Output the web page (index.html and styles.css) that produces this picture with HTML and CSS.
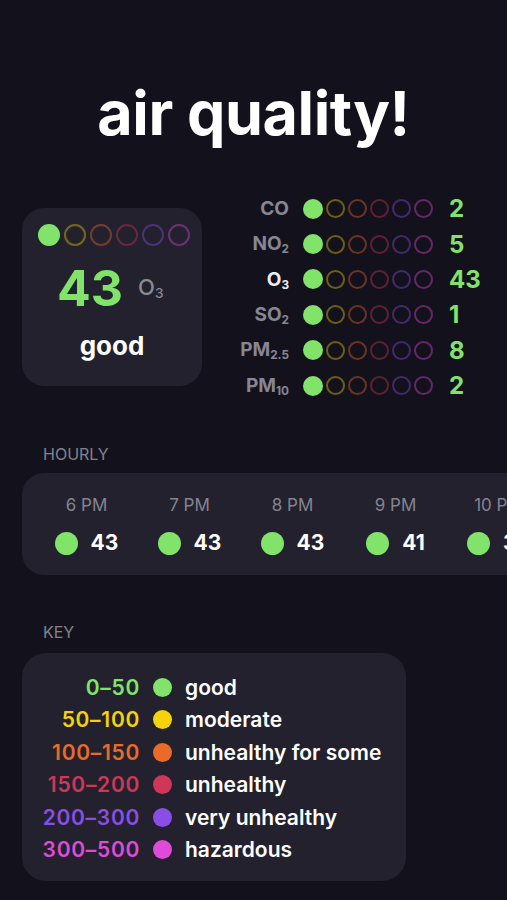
FILE: index.html
```html
<!DOCTYPE html>
<html lang="en">
<head>
    <meta charset="UTF-8">
    <meta name="viewport" content="width=device-width, initial-scale=1.0">
    <title>air quality!</title>
    <link rel="stylesheet" href="styles.css">
</head>
<body>
    <h1 class="title">air quality!</h1>

    <div class="overview">
        <div class="main-card">
            <div class="scale big">
                <span class="dot good"></span>
                <span class="ring moderate"></span>
                <span class="ring some"></span>
                <span class="ring unhealthy"></span>
                <span class="ring very"></span>
                <span class="ring hazard"></span>
            </div>
            <div class="main-value">
                <span class="aqi">43</span>
                <span class="main-pollutant">O<sub>3</sub></span>
            </div>
            <div class="main-label">good</div>
        </div>

        <div class="pollutants">
            <div class="p-name">CO</div>
            <div class="scale"><span class="dot good"></span><span class="ring moderate"></span><span class="ring some"></span><span class="ring unhealthy"></span><span class="ring very"></span><span class="ring hazard"></span></div>
            <div class="p-value">2</div>

            <div class="p-name">NO<sub>2</sub></div>
            <div class="scale"><span class="dot good"></span><span class="ring moderate"></span><span class="ring some"></span><span class="ring unhealthy"></span><span class="ring very"></span><span class="ring hazard"></span></div>
            <div class="p-value">5</div>

            <div class="p-name active">O<sub>3</sub></div>
            <div class="scale"><span class="dot good"></span><span class="ring moderate"></span><span class="ring some"></span><span class="ring unhealthy"></span><span class="ring very"></span><span class="ring hazard"></span></div>
            <div class="p-value">43</div>

            <div class="p-name">SO<sub>2</sub></div>
            <div class="scale"><span class="dot good"></span><span class="ring moderate"></span><span class="ring some"></span><span class="ring unhealthy"></span><span class="ring very"></span><span class="ring hazard"></span></div>
            <div class="p-value">1</div>

            <div class="p-name">PM<sub>2.5</sub></div>
            <div class="scale"><span class="dot good"></span><span class="ring moderate"></span><span class="ring some"></span><span class="ring unhealthy"></span><span class="ring very"></span><span class="ring hazard"></span></div>
            <div class="p-value">8</div>

            <div class="p-name">PM<sub>10</sub></div>
            <div class="scale"><span class="dot good"></span><span class="ring moderate"></span><span class="ring some"></span><span class="ring unhealthy"></span><span class="ring very"></span><span class="ring hazard"></span></div>
            <div class="p-value">2</div>
        </div>
    </div>

    <div class="section-label">HOURLY</div>
    <div class="hourly">
        <div class="hour">
            <div class="hour-time">6 PM</div>
            <div class="hour-reading"><span class="dot good"></span>43</div>
        </div>
        <div class="hour">
            <div class="hour-time">7 PM</div>
            <div class="hour-reading"><span class="dot good"></span>43</div>
        </div>
        <div class="hour">
            <div class="hour-time">8 PM</div>
            <div class="hour-reading"><span class="dot good"></span>43</div>
        </div>
        <div class="hour">
            <div class="hour-time">9 PM</div>
            <div class="hour-reading"><span class="dot good"></span>41</div>
        </div>
        <div class="hour">
            <div class="hour-time">10 PM</div>
            <div class="hour-reading"><span class="dot good"></span>39</div>
        </div>
    </div>

    <div class="section-label key-label">KEY</div>
    <div class="key">
        <div class="range c-good">0–50</div><span class="dot good"></span><div class="key-name">good</div>
        <div class="range c-moderate">50–100</div><span class="dot moderate"></span><div class="key-name">moderate</div>
        <div class="range c-some">100–150</div><span class="dot some"></span><div class="key-name">unhealthy for some</div>
        <div class="range c-unhealthy">150–200</div><span class="dot unhealthy"></span><div class="key-name">unhealthy</div>
        <div class="range c-very">200–300</div><span class="dot very"></span><div class="key-name">very unhealthy</div>
        <div class="range c-hazard">300–500</div><span class="dot hazard"></span><div class="key-name">hazardous</div>
    </div>
</body>
</html>
```

FILE: styles.css
```css
body {
    margin: 0;
    padding: 0 0 0 22px;
    background-color: #13121c;
    color: #ffffff;
    font-family: Inter, "Noto Sans", sans-serif;
    overflow-x: hidden;
}
.title {
    margin: 0;
    padding-top: 78px;
    padding-right: 22px;
    text-align: center;
    font-size: 61px;
    font-weight: 700;
    line-height: 70px;
    letter-spacing: -0.4px;
}

/* colours of the scale */
.good { --c: #82e36a; }
.moderate { --c: #f4d20c; }
.some { --c: #ea6a2a; }
.unhealthy { --c: #cf3658; }
.very { --c: #8a4ee6; }
.hazard { --c: #df4ad8; }

.dot {
    display: inline-block;
    width: 20px;
    height: 20px;
    border-radius: 50%;
    background-color: var(--c);
    flex-shrink: 0;
}
.ring {
    display: inline-block;
    width: 19px;
    height: 19px;
    border-radius: 50%;
    border: 2px solid var(--c);
    box-sizing: border-box;
    opacity: 0.4;
    flex-shrink: 0;
}
.scale {
    display: flex;
    align-items: center;
    gap: 3px;
}
.scale.big {
    gap: 4px;
}
.scale.big .dot,
.scale.big .ring {
    width: 22px;
    height: 22px;
}
.scale.big .ring {
    border-width: 2.5px;
}

/* top overview */
.overview {
    display: flex;
    align-items: center;
    margin-top: 43px;
}
.main-card {
    width: 180px;
    height: 178px;
    box-sizing: border-box;
    padding: 16px 16px 0 16px;
    background-color: #22212d;
    border-radius: 22px;
}
.main-value {
    display: flex;
    align-items: center;
    margin-top: 13px;
    padding-left: 19px;
}
.aqi {
    color: #82e36a;
    font-size: 50px;
    font-weight: 700;
    line-height: 58px;
}
.main-pollutant {
    margin-left: 15px;
    color: #8a8996;
    font-size: 22px;
    font-weight: 500;
}
.main-pollutant sub,
.p-name sub {
    font-size: 0.62em;
    vertical-align: -0.25em;
}
.main-label {
    margin-top: 13px;
    text-align: center;
    font-size: 26px;
    font-weight: 700;
}
.pollutants {
    display: grid;
    grid-template-columns: 61px auto auto;
    grid-auto-rows: 35.4px;
    align-items: center;
    column-gap: 12px;
    margin-left: 26px;
}
.pollutants .scale {
    margin-left: 2px;
    margin-right: 4px;
}
.p-name {
    text-align: right;
    color: #878694;
    font-size: 19px;
    font-weight: 700;
    white-space: nowrap;
}
.p-name.active {
    color: #ececf2;
}
.p-value {
    color: #82e36a;
    font-size: 24px;
    font-weight: 700;
}

/* hourly */
.section-label {
    margin-top: 41px;
    padding-left: 21px;
    color: #83828e;
    font-size: 16px;
    line-height: 20px;
}
.hourly {
    display: flex;
    margin-top: 9px;
    margin-right: -120px;
    padding: 19px 0 19px 13px;
    background-color: #22212d;
    border-radius: 22px;
}
.hour {
    width: 103px;
    flex-shrink: 0;
    text-align: center;
}
.hour-time {
    color: #858491;
    font-size: 17px;
    line-height: 26px;
}
.hour-reading {
    display: flex;
    align-items: center;
    justify-content: center;
    gap: 13px;
    margin-top: 12px;
    font-size: 21px;
    font-weight: 700;
    line-height: 26px;
}
.hour-reading .dot {
    width: 23px;
    height: 23px;
}

/* key */
.key-label {
    margin-top: 47px;
}
.key {
    display: grid;
    grid-template-columns: 98px 19px auto;
    grid-auto-rows: 32.4px;
    align-items: center;
    column-gap: 13px;
    width: 384px;
    box-sizing: border-box;
    margin-top: 11px;
    padding: 18px 0 15px 20px;
    background-color: #22212d;
    border-radius: 24px;
}
.key .dot {
    width: 19px;
    height: 19px;
}
.range {
    text-align: right;
    font-size: 21px;
    font-weight: 600;
    letter-spacing: 0.7px;
    white-space: nowrap;
}
.key-name {
    font-size: 21px;
    font-weight: 600;
    white-space: nowrap;
}
.c-good { color: #82e36a; }
.c-moderate { color: #f4d20c; }
.c-some { color: #ea6a2a; }
.c-unhealthy { color: #cf3658; }
.c-very { color: #8a4ee6; }
.c-hazard { color: #df4ad8; }
```
